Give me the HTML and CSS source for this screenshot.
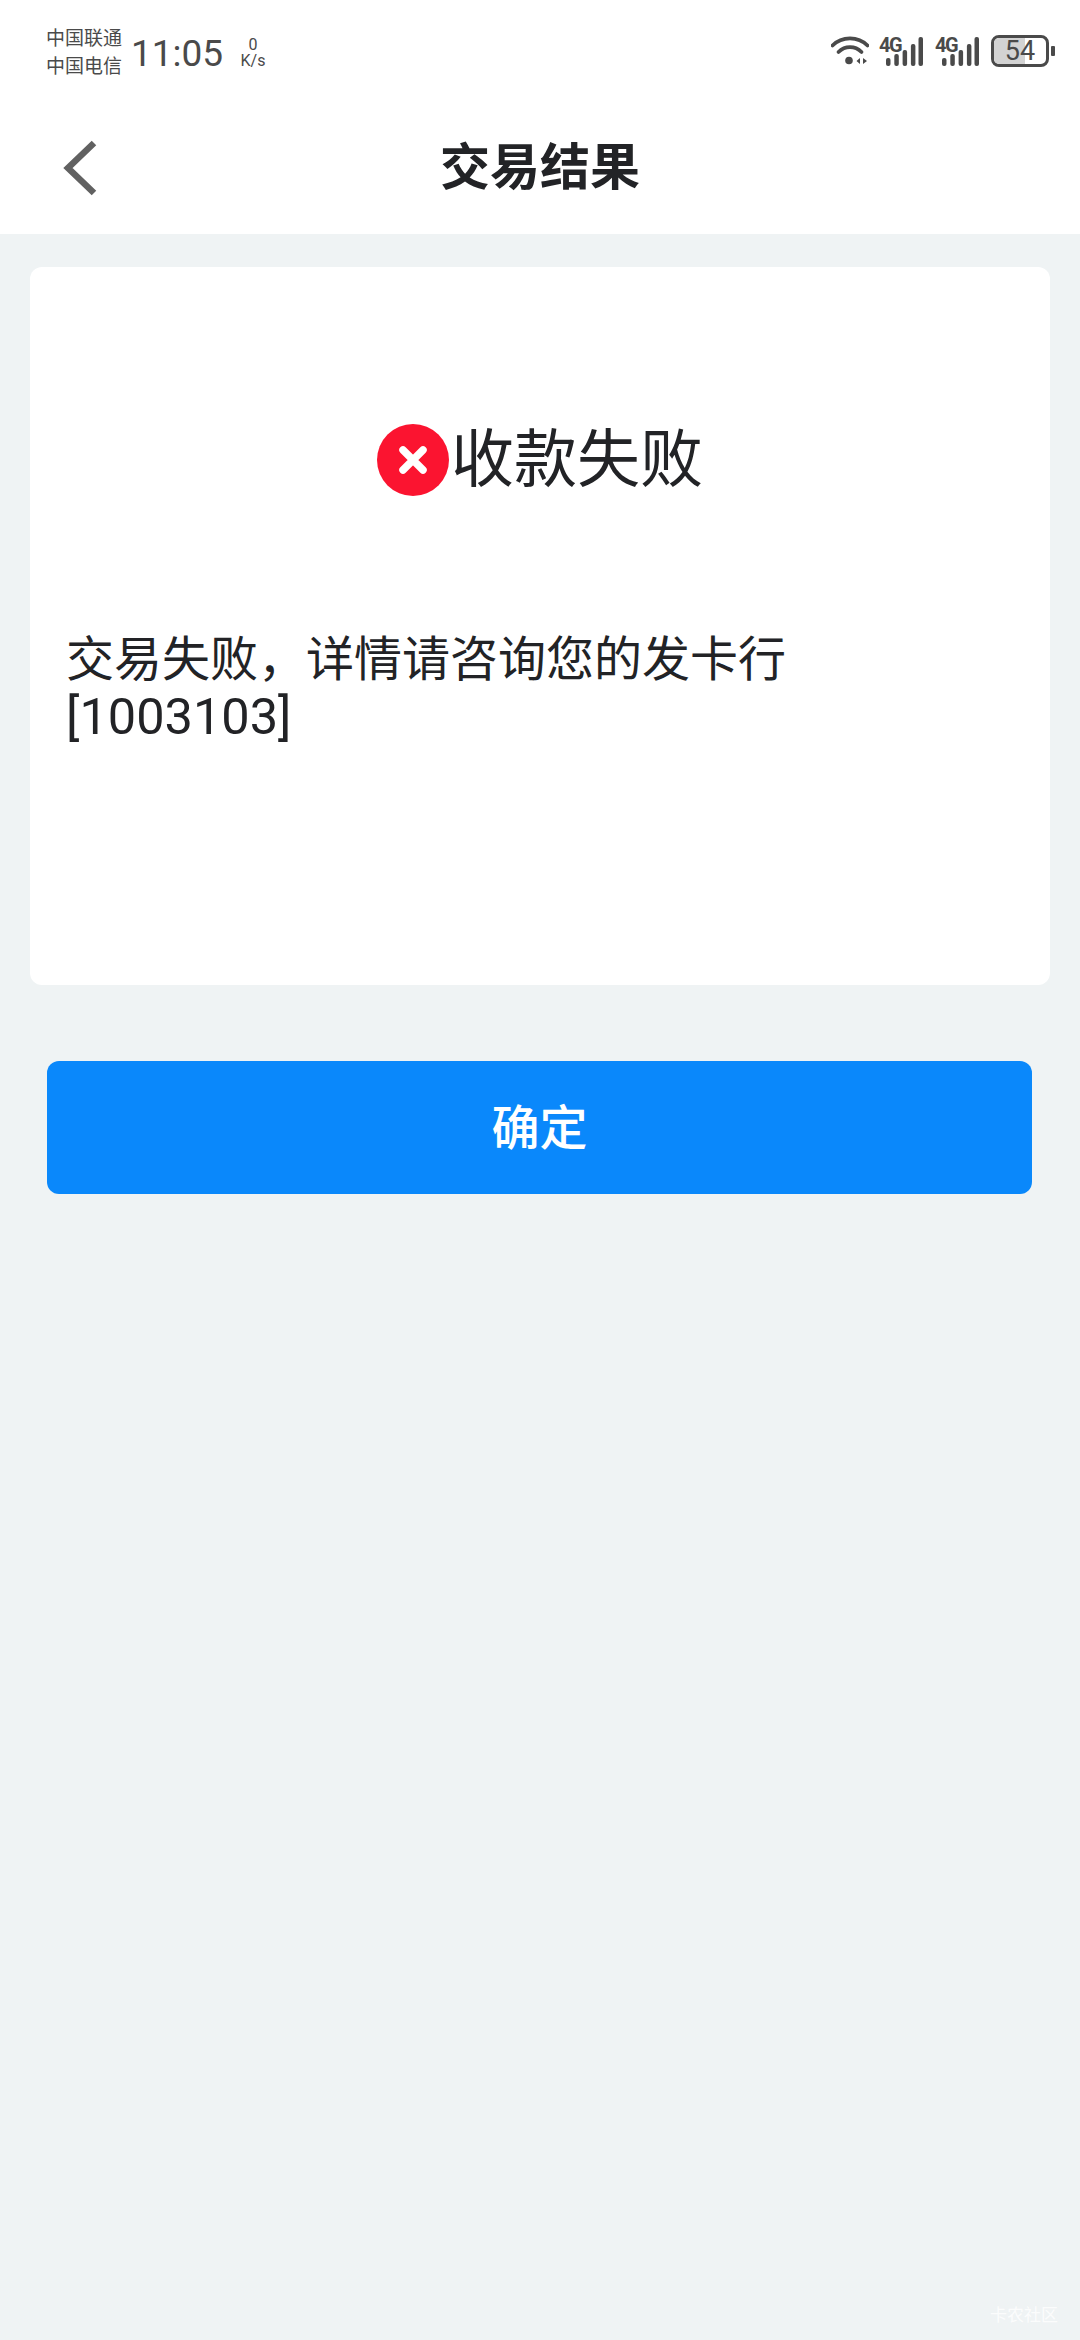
FILE: index.html
```html
<!DOCTYPE html>
<html lang="zh-CN">
<head>
  <meta charset="UTF-8">
  <title>交易结果</title>
  <link rel="stylesheet" href="styles.css">
</head>
<body>
  <div class="top">
    <div class="status">
      <div class="carriers">
        <div>中国联通</div>
        <div>中国电信</div>
      </div>
      <div class="time">11:05</div>
      <div class="speed">
        <div>0</div>
        <div>K/s</div>
      </div>
      <div class="status-icons">
        <svg class="wifi" width="38" height="30" viewBox="0 0 38 30">
          <path d="M1.500 9.500 C11 0 27 0 36.500 9.500" fill="none" stroke="#4a4a4a" stroke-width="3.800" stroke-linecap="round"/>
          <path d="M7.500 16 C14 9.500 24 9.500 30.500 16" fill="none" stroke="#4a4a4a" stroke-width="3.800" stroke-linecap="round"/>
          <circle cx="18" cy="24.500" r="3.800" fill="#4a4a4a"/>
          <path d="M29 22 L25.500 25 L29 28 Z M32 22 L36 25 L32 28 Z" fill="#4a4a4a"/>
        </svg>
        <div class="signal">
          <span class="signal-label">4G</span>
          <svg width="44" height="30" viewBox="0 0 44 30">
            <rect x="7" y="22" width="4.500" height="8" rx="2" fill="#4a4a4a"/>
            <rect x="15.300" y="18" width="4.500" height="12" rx="2" fill="#4a4a4a"/>
            <rect x="23.600" y="14" width="4.500" height="16" rx="2" fill="#4a4a4a"/>
            <rect x="31.900" y="8" width="4.500" height="22" rx="2" fill="#4a4a4a"/>
            <rect x="39.500" y="1" width="4.500" height="29" rx="2" fill="#4a4a4a"/>
          </svg>
        </div>
        <div class="signal">
          <span class="signal-label">4G</span>
          <svg width="44" height="30" viewBox="0 0 44 30">
            <rect x="7" y="22" width="4.500" height="8" rx="2" fill="#4a4a4a"/>
            <rect x="15.300" y="18" width="4.500" height="12" rx="2" fill="#4a4a4a"/>
            <rect x="23.600" y="14" width="4.500" height="16" rx="2" fill="#4a4a4a"/>
            <rect x="31.900" y="8" width="4.500" height="22" rx="2" fill="#4a4a4a"/>
            <rect x="39.500" y="1" width="4.500" height="29" rx="2" fill="#4a4a4a"/>
          </svg>
        </div>
        <div class="battery">
          <div class="battery-body">
            <div class="battery-fill"></div>
            <span class="battery-num">54</span>
          </div>
          <div class="battery-nub"></div>
        </div>
      </div>
    </div>
    <div class="nav">
      <svg class="back" width="36" height="56" viewBox="0 0 36 56">
        <path d="M32 3 L6 28 L32 53" fill="none" stroke="#616161" stroke-width="6.500"/>
      </svg>
      <h1>交易结果</h1>
    </div>
  </div>

  <div class="card">
    <div class="result">
      <svg width="72" height="72" viewBox="0 0 72 72">
        <circle cx="36" cy="36" r="36" fill="#fb1430"/>
        <path d="M26 26 L46 46 M46 26 L26 46" stroke="#fff" stroke-width="7.500" stroke-linecap="round"/>
      </svg>
      <span>收款失败</span>
    </div>
    <p class="message">交易失败，详情请咨询您的发卡行<br><span class="code">[1003103]</span></p>
  </div>

  <button class="ok" type="button">确定</button>

  <div class="watermark">卡农社区</div>
</body>
</html>
```

FILE: styles.css
```css
* {
  box-sizing: border-box;
}
html,
body {
  height: 100%;
}
body {
  margin: 0;
  background-color: #eff3f4;
  color: #222326;
  font-family: "Roboto", "Noto Sans CJK SC", sans-serif;
  position: relative;
  overflow: hidden;
}
.top {
  background-color: #fff;
  height: 234px;
}
.status {
  display: flex;
  align-items: center;
  height: 106px;
  padding-left: 46px;
  color: #4a4a4a;
}
.carriers {
  font-size: 19px;
  line-height: 28px;
  width: 85px;
}
.time {
  font-size: 37px;
  width: 108px;
}
.speed {
  font-size: 16px;
  line-height: 16px;
  text-align: center;
  width: 28px;
}
.status-icons {
  display: flex;
  align-items: center;
  margin-left: auto;
  margin-bottom: 4px;
  padding-right: 25px;
  gap: 10px;
}
.signal {
  position: relative;
  width: 44px;
  height: 30px;
  margin-right: 2px;
}
.signal-label {
  position: absolute;
  top: -1px;
  left: 0;
  font-weight: bold;
  font-size: 20px;
  line-height: 20px;
  letter-spacing: -1.5px;
}
.battery {
  display: flex;
  align-items: center;
  gap: 2px;
}
.battery-body {
  position: relative;
  width: 58px;
  height: 32px;
  border: 3px solid #4a4a4a;
  border-radius: 8px;
  overflow: hidden;
  display: flex;
  align-items: center;
  justify-content: center;
}
.battery-fill {
  position: absolute;
  top: 0;
  left: 0;
  bottom: 0;
  width: 60%;
  background-color: #d3d3d3;
}
.battery-num {
  position: relative;
  font-size: 27px;
  line-height: 26px;
}
.battery-nub {
  width: 4px;
  height: 10px;
  border-radius: 1px;
  background-color: #4a4a4a;
}
.nav {
  position: relative;
  display: flex;
  align-items: center;
  justify-content: center;
  height: 128px;
  padding-bottom: 15px;
}
.back {
  position: absolute;
  left: 62px;
  top: 34px;
}
h1 {
  margin: 0;
  font-size: 50px;
  font-weight: bold;
}
.card {
  margin: 33px 30px 0;
  height: 718px;
  background-color: #fff;
  border-radius: 12px;
  padding-top: 157px;
}
.result {
  display: flex;
  align-items: center;
  justify-content: center;
  gap: 2px;
  font-size: 63px;
  line-height: 68px;
}
.message {
  margin: 135px 36px 0;
  font-size: 48px;
  line-height: 57px;
}
.code {
  font-size: 50.500px;
}
.ok {
  display: block;
  width: 985px;
  height: 133px;
  margin: 76px 0 0 47px;
  padding-bottom: 8px;
  border: none;
  border-radius: 12px;
  background-color: #0a88fb;
  color: #fff;
  font-family: inherit;
  font-size: 48px;
  font-weight: 500;
}
.watermark {
  position: absolute;
  right: 22px;
  bottom: 14px;
  color: #fff;
  font-size: 17px;
  opacity: 0.8;
}
```
